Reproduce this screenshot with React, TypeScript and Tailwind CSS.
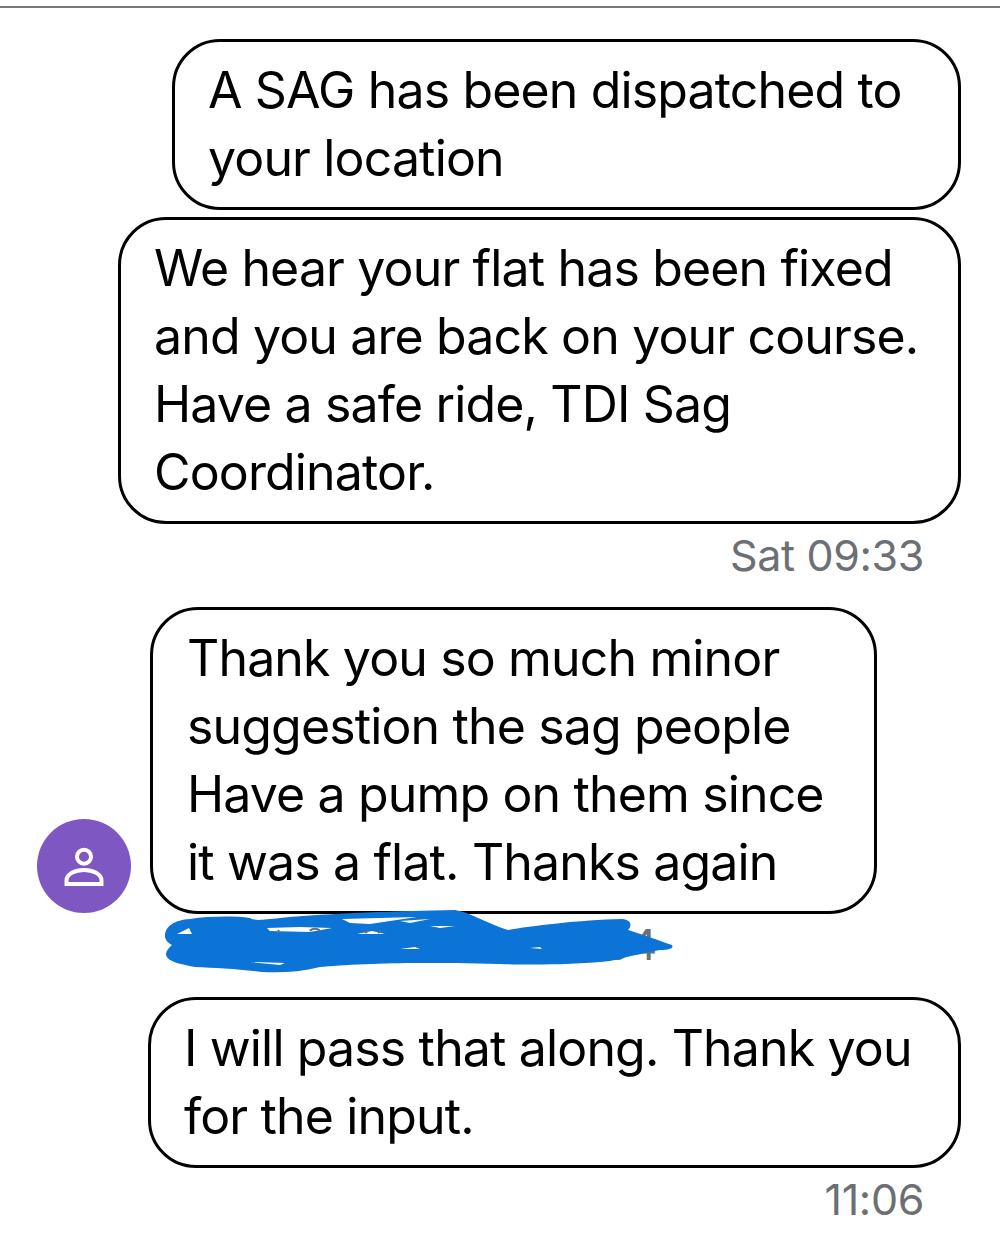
const font = "font-['Inter',sans-serif]";

function Bubble({ lines, className }: { lines: string[]; className: string }) {
  return (
    <div
      className={`rounded-[48px] border-[3px] border-black bg-white pt-[14px] pb-[15px] text-[50px] leading-[68px] tracking-[-0.85px] whitespace-nowrap text-black ${className}`}
    >
      {lines.map((line) => (
        <div key={line}>{line}</div>
      ))}
    </div>
  );
}

function Stamp({ children, className }: { children: string; className: string }) {
  return <div className={`text-right text-[43px] leading-[50px] tracking-[-0.35px] text-[#6c6f73] ${className}`}>{children}</div>;
}

// blue marker over the redacted name, drawn in page coordinates
function Scribble() {
  return (
    <svg className="absolute top-[900px] left-[150px]" width="540" height="80" viewBox="150 900 540 80">
      <path
        d="M165 936C165 926 175 920 190 919C210 916 235 916 250 918C255 921 262 920 280 918C330 913 400 911 455 910C470 912 490 925 508 930C530 926 580 920 622 919C632 920 632 926 628 930C645 935 660 941 672 945C674 948 670 950 660 950C650 952 630 956 610 961C570 965 530 965 500 964C470 963 440 963 420 963C385 963 340 965 320 967C300 972 280 973 262 972C240 969 215 968 195 967C180 964 168 962 166 955C166 950 170 947 172 945C168 943 165 940 165 936Z"
        fill="#0b74d6"
      />
      <path d="M177 934L189 928L192 934Z M267 928L300 927L332 928L310 932L270 931Z M342 919L417 917L370 924L350 923Z M357 934L372 931L385 934Z M400 921L430 919L410 923Z M430 926L455 926L440 928Z M400 949L415 947L420 949Z M530 948L540 947L542 949Z M250 962L285 963L280 965Z" fill="#ffffff" />
      <path d="M278 930L280 933 M310 931C312 928 318 928 320 931 M365 933L368 931 M378 933L381 931" stroke="#6c6f73" strokeWidth="2" fill="none" />
    </svg>
  );
}

export default function App() {
  return (
    <div className={`relative h-[1250px] w-[1000px] overflow-hidden bg-white pt-[6px] ${font}`}>
      <div className="h-[2px] bg-[#777777]" />

      <div className="mt-[31px] flex flex-col items-end pr-[39px]">
        <Bubble className="w-[789px] pl-[33px]" lines={["A SAG has been dispatched to", "your location"]} />
        <Bubble className="mt-[7px] w-[843px] pl-[33px]" lines={["We hear your flat has been fixed", "and you are back on your course.", "Have a safe ride, TDI Sag", "Coordinator."]} />
      </div>
      <Stamp className="mt-[6px] pr-[76px]">Sat 09:33</Stamp>

      <div className="mt-[27px] flex items-end pl-[37px]">
        <div className="mb-[1px] flex size-[94px] items-center justify-center rounded-full bg-[#7e57c2]">
          <svg width="44" height="44" viewBox="0 0 44 44" fill="none" stroke="#fff" strokeWidth="4">
            <circle cx="22" cy="12.700" r="7" />
            <path d="M4.500 40H39.500V36.500C39.500 30 31 26 22 26C13 26 4.500 30 4.500 36.500Z" />
          </svg>
        </div>
        <Bubble className="ml-[19px] w-[727px] pl-[34px]" lines={["Thank you so much minor", "suggestion the sag people", "Have a pump on them since", "it was a flat. Thanks again"]} />
      </div>
      <Stamp className="mt-[5px] pr-[343px]">Sat 09:34</Stamp>

      <div className="mt-[28px] flex justify-end pr-[39px]">
        <Bubble className="w-[813px] pl-[33px]" lines={["I will pass that along. Thank you", "for the input."]} />
      </div>
      <Stamp className="mt-[6px] pr-[76px]">11:06</Stamp>

      <Scribble />
    </div>
  );
}
